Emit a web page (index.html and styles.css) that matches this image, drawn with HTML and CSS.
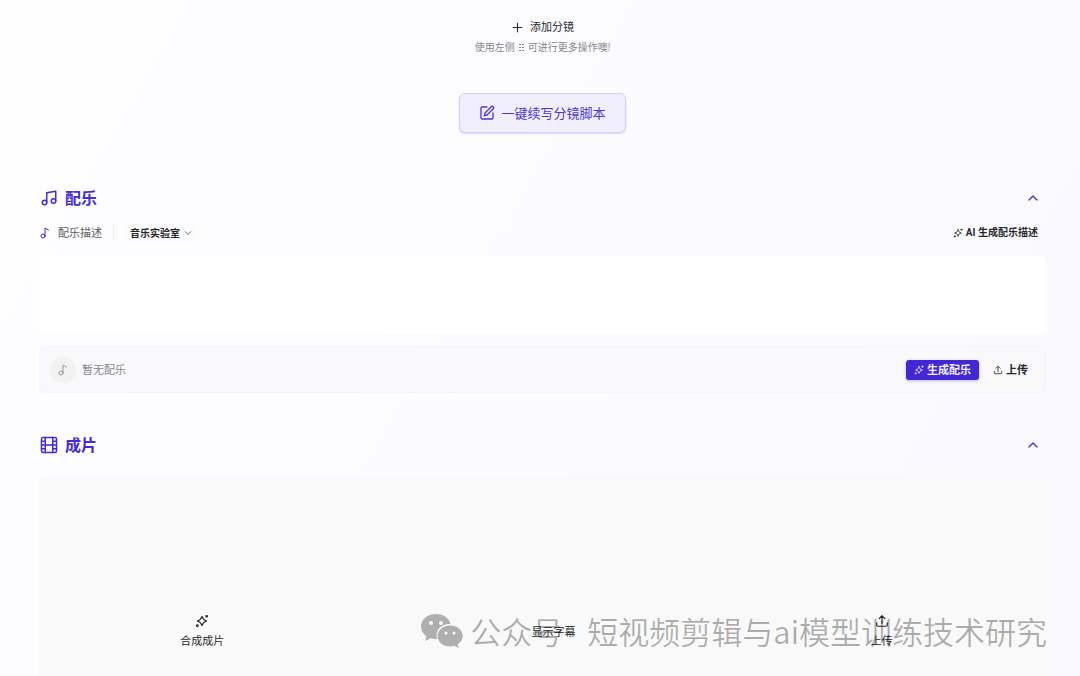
FILE: index.html
```html
<!DOCTYPE html>
<html lang="zh-CN">
<head>
<meta charset="utf-8">
<meta name="viewport" content="width=device-width, initial-scale=1">
<title>分镜脚本</title>
<link rel="stylesheet" href="styles.css">
</head>
<body>
<svg class="defs" aria-hidden="true">
  <symbol id="sparkle" viewBox="0 0 24 24"><path d="M12 4c1.400 5 3 6.600 8 8-5 1.400-6.600 3-8 8-1.400-5-3-6.600-8-8 5-1.400 6.600-3 8-8z"/><circle cx="20" cy="4" r="1.500"/><circle cx="4" cy="20" r="1.500"/></symbol>
  <symbol id="note" viewBox="0 0 24 24"><circle cx="8" cy="18" r="4"/><path d="M12 18V2l7 4"/></symbol>
  <symbol id="up" viewBox="0 0 24 24"><path d="M18 15l-6-6-6 6"/></symbol>
  <symbol id="upload" viewBox="0 0 24 24"><path d="M12 16V3M7 8l5-5 5 5M3 15v4a2 2 0 0 0 2 2h14a2 2 0 0 0 2-2v-4"/></symbol>
</svg>
<main class="page">
  <div class="add">
    <button class="plain add-button" type="button">
      <svg class="icon s13" viewBox="0 0 24 24"><path d="M4 12h16M12 4v16"/></svg>添加分镜
    </button>
    <p class="hint">使用左侧<svg class="grip" viewBox="0 0 5 8"><path d="M0 0h2v1H0zM3 0h2v1H3zM0 3h2v1H0zM3 3h2v1H3zM0 6h2v1H0zM3 6h2v1H3z"/></svg>可进行更多操作噢!</p>
    <button class="continue" type="button">
      <svg class="icon s16" viewBox="0 0 24 24"><path d="M12 3H5a2 2 0 0 0-2 2v14a2 2 0 0 0 2 2h14a2 2 0 0 0 2-2v-7"/><path d="M18.400 2.600a2.100 2.100 0 0 1 3 3L12 15l-4 1 1-4z"/></svg>一键续写分镜脚本
    </button>
  </div>

  <section class="music">
    <header class="head">
      <h2 class="title"><svg class="icon s18" viewBox="0 0 24 24"><path d="M9 18V5l12-2v13"/><circle cx="6" cy="18" r="3"/><circle cx="18" cy="16" r="3"/></svg>配乐</h2>
      <button class="plain toggle" type="button" aria-label="收起配乐"><svg class="icon s16"><use href="#up"/></svg></button>
    </header>
    <div class="tools">
      <label class="caption" for="desc"><svg class="icon s12"><use href="#note"/></svg>配乐描述</label>
      <button class="lab" type="button">音乐实验室<svg class="icon s8" viewBox="0 0 24 24"><path d="M4 8l8 8 8-8"/></svg></button>
      <button class="plain ai" type="button"><svg class="icon s10"><use href="#sparkle"/></svg>AI 生成配乐描述</button>
    </div>
    <textarea class="desc" id="desc"></textarea>
    <div class="track">
      <span class="disc"><svg class="icon s12"><use href="#note"/></svg></span>
      <span class="empty">暂无配乐</span>
      <button class="primary" type="button"><svg class="icon s10"><use href="#sparkle"/></svg>生成配乐</button>
      <button class="plain send" type="button"><svg class="icon s10"><use href="#upload"/></svg>上传</button>
    </div>
  </section>

  <section class="film">
    <header class="head">
      <h2 class="title"><svg class="icon s18" viewBox="0 0 24 24"><rect x="2" y="2" width="20" height="20" rx="2"/><path d="M7 2v20M17 2v20M2 12h20M2 7h5M2 17h5M17 7h5M17 17h5"/></svg>成片</h2>
      <button class="plain toggle" type="button" aria-label="收起成片"><svg class="icon s16"><use href="#up"/></svg></button>
    </header>
    <div class="stage">
      <button class="plain action" type="button"><svg class="icon s14"><use href="#sparkle"/></svg>合成成片</button>
      <button class="plain action" type="button">显示字幕</button>
      <button class="plain action" type="button"><svg class="icon s14"><use href="#upload"/></svg>上传</button>
    </div>
  </section>
</main>
<div class="watermark">
  <svg class="wechat" viewBox="0 0 42 35"><path d="M15 0C6.500 0 0 5.500 0 12.500c0 4 2 7.400 5.500 9.700L4.200 27l5.300-2.800c2 .6 4 .8 6.500.7C14 16 20 9.500 29.500 10 28 4 22.500 0 15 0z"/><path d="M29 11.500c-7 0-12.500 4.700-12.500 10.500S22 32.500 29 32.500c1.500 0 3-.2 4.500-.7l4.200 2.300-1-3.800c3.200-2 5-5 5-8.300C41.700 16.200 36 11.500 29 11.500z"/><g class="eyes"><circle cx="10" cy="9" r="2"/><circle cx="20" cy="9" r="2"/><circle cx="25" cy="19" r="1.600"/><circle cx="33" cy="19" r="1.600"/></g></svg>
  <span>公众号</span><span class="account">短视频剪辑与ai模型训练技术研究</span>
</div>
</body>
</html>
```
FILE: styles.css
```css
* { box-sizing: border-box; }
body {
  margin: 0;
  font-family: "Open Sans", "Noto Sans CJK SC", sans-serif;
  font-size: 11px;
  line-height: 16px;
  color: #27272a;
  background: linear-gradient(120deg, #fefeff, #fcfcff 40%, #f9f8ff);
}
button, textarea { font: inherit; color: inherit; }
button {
  display: inline-flex;
  align-items: center;
  justify-content: center;
  padding: 0;
  cursor: pointer;
}
.defs { display: none; }
.icon {
  flex: none;
  fill: none;
  stroke: currentColor;
  stroke-width: 2;
  stroke-linecap: round;
  stroke-linejoin: round;
}
.s8 { width: 8px; height: 8px; }
.s10 { width: 10px; height: 10px; }
.s12 { width: 12px; height: 12px; }
.s13 { width: 13px; height: 13px; }
.s14 { width: 14px; height: 14px; }
.s16 { width: 16px; height: 16px; }
.s18 { width: 18px; height: 18px; }
.plain { border: 0; background: none; }
.page {
  display: flex;
  flex-direction: column;
  min-height: 100vh;
  padding: 19px 34px 0 39px;
}
.add {
  display: flex;
  flex-direction: column;
  align-items: center;
}
.add-button { gap: 6px; }
.hint {
  display: flex;
  align-items: center;
  gap: 4px;
  margin: 4px 0 38px;
  font-size: 10px;
  color: #85858b;
}
.grip { width: 5px; height: 8px; margin-top: 2px; fill: #85858b; }
.continue {
  gap: 6px;
  height: 40px;
  padding: 0 19px;
  font-size: 13px;
  color: #4c35d8;
  background: #f2effd;
  border: 1px solid #d5cdf7;
  border-radius: 6px;
  box-shadow: 0 1px 2px #5038d833;
}
.music { margin-top: 53px; }
.head {
  display: flex;
  align-items: center;
  justify-content: space-between;
  height: 24px;
  padding: 0 5px 0 1px;
  color: #4629d9;
}
.title {
  display: flex;
  align-items: center;
  gap: 7px;
  margin: 0;
  font-size: 16px;
  line-height: 24px;
}
.tools {
  display: flex;
  align-items: center;
  height: 22px;
  margin: 12px 8px 12px 0;
}
.caption {
  display: flex;
  align-items: center;
  gap: 7px;
  padding-right: 11px;
  color: #5b5b60;
  border-right: 1px solid #efeff2;
}
.caption .icon { color: #4629d9; }
.lab {
  gap: 4px;
  height: 20px;
  margin-left: 10px;
  padding: 0 6px;
  font-size: 10px;
  font-weight: 700;
  background: #fbfbfc;
  border: 0;
  border-radius: 4px;
}
.ai { gap: 3px; margin-left: auto; font-family: Roboto, "Noto Sans CJK SC", sans-serif; font-size: 10px; font-weight: 700; }
.desc {
  display: block;
  width: 100%;
  height: 78px;
  padding: 8px;
  background: #fff;
  border: 0;
  border-radius: 6px;
  resize: none;
}
.track {
  display: flex;
  align-items: center;
  height: 47px;
  margin-top: 12px;
  padding: 0 17px 0 10px;
  background: #f9f9fb;
  border: 1px solid #f5f5f8;
  border-radius: 6px;
}
.disc {
  display: grid;
  place-items: center;
  width: 26px;
  height: 26px;
  margin-right: 6px;
  color: #96969a;
  background: #f2f2f3;
  border-radius: 50%;
}
.empty { margin-right: auto; color: #858589; }
.primary {
  gap: 3px;
  height: 20px;
  padding: 0 8px;
  font-weight: 700;
  color: #f1edff;
  background: #4327d5;
  border: 0;
  border-radius: 3px;
  box-shadow: 0 1px 3px #4327d555;
}
.send { gap: 3px; margin-left: 14px; font-weight: 700; }
.film {
  display: flex;
  flex: 1;
  flex-direction: column;
  margin-top: 40px;
}
.stage {
  display: grid;
  flex: 1;
  grid-template-columns: 326fr 376fr 280fr;
  align-items: center;
  justify-items: center;
  margin-top: 20px;
  padding: 132px 24px 22px 0;
  background: #f9f9fa;
  border-radius: 6px 6px 0 0;
}
.action { flex-direction: column; gap: 5px; }
.watermark {
  position: absolute;
  right: 33px;
  bottom: 23px;
  display: flex;
  align-items: center;
  font-family: "Noto Sans CJK SC", sans-serif;
  font-size: 31px;
  line-height: 44px;
  font-weight: 350;
  color: #00000050;
  white-space: nowrap;
  pointer-events: none;
}
.wechat { width: 42px; height: 35px; margin-right: 7px; fill: #afafaf; }
.eyes { fill: #f9f9fa; }
.account { margin-left: 24px; }
```
